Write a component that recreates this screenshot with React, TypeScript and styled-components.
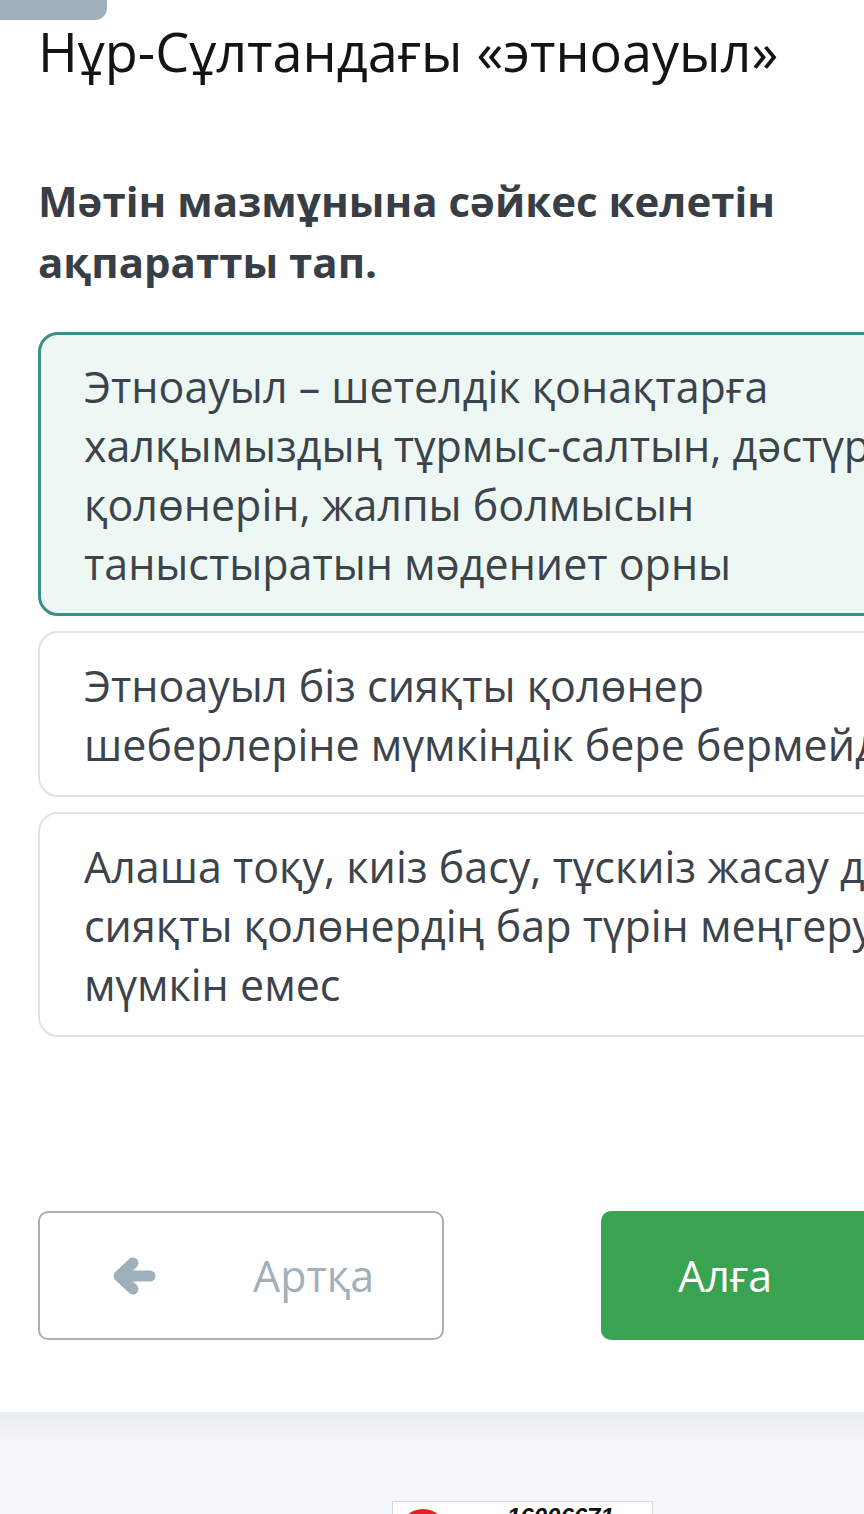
import React from 'react';
import styled, { createGlobalStyle } from 'styled-components';

const GlobalStyle = createGlobalStyle`
	html, body {
		margin: 0;
		padding: 0;
		background: #ffffff;
		overflow: hidden;
	}
	body {
		font-family: 'Open Sans', 'Noto Sans', sans-serif;
		width: 864px;
		height: 1514px;
	}
`;

type Option = {
	lines: string[];
	selected?: boolean;
};

const options: Option[] = [
	{
		lines: [
			'Этноауыл – шетелдік қонақтарға',
			'халқымыздың тұрмыс-салтын, дәстүрін,',
			'қолөнерін, жалпы болмысын',
			'таныстыратын мәдениет орны',
		],
		selected: true,
	},
	{
		lines: ['Этноауыл біз сияқты қолөнер', 'шеберлеріне мүмкіндік бере бермейді'],
	},
	{
		lines: [
			'Алаша тоқу, киіз басу, тұскиіз жасау деген',
			'сияқты қолөнердің бар түрін меңгеру',
			'мүмкін емес',
		],
	},
];

const BackArrow = () => (
	<svg viewBox="0 0 44 38" width="44" height="38" aria-hidden>
		<path
			d="M21 6 L7 19 L21 32"
			fill="none"
			stroke="currentColor"
			strokeWidth="11"
			strokeLinecap="round"
			strokeLinejoin="round"
		/>
		<path d="M9 19 H38" stroke="currentColor" strokeWidth="11" strokeLinecap="round" />
	</svg>
);

const App: React.FC = () => (
	<>
		<GlobalStyle />
		<Page>
			<Tab />
			<Main>
				<Title>Нұр-Сұлтандағы «этноауыл»</Title>
				<Question>
					Мәтін мазмұнына сәйкес келетін
					<br />
					ақпаратты тап.
				</Question>
				<OptionList>
					{options.map((o, i) => (
						<OptionCard key={i} $selected={o.selected}>
							{o.lines.map((l, j) => (
								<OptionLine key={j}>{l}</OptionLine>
							))}
						</OptionCard>
					))}
				</OptionList>
				<Nav>
					<BackButton>
						<BackArrow />
						<span>Артқа</span>
					</BackButton>
					<NextButton>Алға</NextButton>
				</Nav>
			</Main>
			<Footer>
				<Counter>
					<CounterDot />
					<CounterText>16006671</CounterText>
				</Counter>
			</Footer>
		</Page>
	</>
);

export default App;

/**
 * Styled components
 */

const Page = styled.div`
	display: flex;
	flex-direction: column;
	width: 864px;
	height: 1514px;
	overflow: hidden;
`;

const Tab = styled.div`
	width: 107px;
	height: 20px;
	background: #9fb0bd;
	border-bottom-right-radius: 12px;
	flex-shrink: 0;
`;

const Main = styled.div`
	padding: 0 0 72px 38px;
`;

const Title = styled.h1`
	margin: 0;
	font-size: 54px;
	font-weight: 400;
	line-height: 62px;
	color: #141414;
	white-space: nowrap;
`;

const Question = styled.h2`
	margin: 88px 0 0;
	font-size: 42px;
	font-weight: 700;
	line-height: 61px;
	color: #383e45;
	white-space: nowrap;
`;

const OptionList = styled.div`
	display: flex;
	flex-direction: column;
	gap: 15px;
	margin-top: 40px;
`;

const OptionCard = styled.div<{ $selected?: boolean }>`
	width: 900px;
	box-sizing: border-box;
	padding: ${(p) => (p.$selected ? '22px 0 20px 43px' : '23px 0 21px 44px')};
	border-radius: 20px;
	border: ${(p) => (p.$selected ? '3px solid #3c8e86' : '2px solid #e0e2e4')};
	background: ${(p) => (p.$selected ? '#edf8f4' : '#ffffff')};
`;

const OptionLine = styled.div`
	font-size: 43px;
	line-height: 59px;
	color: #3c434b;
	white-space: nowrap;
`;

const Nav = styled.div`
	display: flex;
	gap: 157px;
	margin-top: 174px;
`;

const buttonBase = `
	flex-shrink: 0;
	width: 406px;
	height: 129px;
	box-sizing: border-box;
	border-radius: 10px;
	display: flex;
	align-items: center;
	font-family: 'Open Sans', 'Noto Sans', sans-serif;
	font-size: 43px;
`;

const BackButton = styled.div`
	${buttonBase}
	border: 2px solid #a6b1b8;
	color: #a3b0b9;
	padding-left: 72px;
	gap: 97px;

	svg {
		color: #9fb0bd;
		flex-shrink: 0;
	}
`;

const NextButton = styled.div`
	${buttonBase}
	background: #3aa352;
	color: #ffffff;
	padding-left: 77px;
`;

const Footer = styled.div`
	flex: 1;
	background: linear-gradient(#e9edf0 0, #f4f7fa 30px, #f6f9fb 100%);
	display: flex;
	justify-content: flex-start;
	padding-left: 392px;
	padding-top: 89px;
`;

const Counter = styled.div`
	width: 261px;
	height: 40px;
	background: #ffffff;
	border: 1px solid #d6d9dc;
	display: flex;
	align-items: flex-start;
	gap: 60px;
	padding: 3px 0 0 6px;
	box-sizing: border-box;
	overflow: hidden;
`;

const CounterDot = styled.div`
	width: 48px;
	height: 48px;
	border-radius: 50%;
	background: #e02424;
	margin-top: 4px;
`;

const CounterText = styled.span`
	font-family: 'Liberation Sans', sans-serif;
	font-style: italic;
	font-weight: 700;
	font-size: 24px;
	color: #111;
	line-height: 1;
`;
